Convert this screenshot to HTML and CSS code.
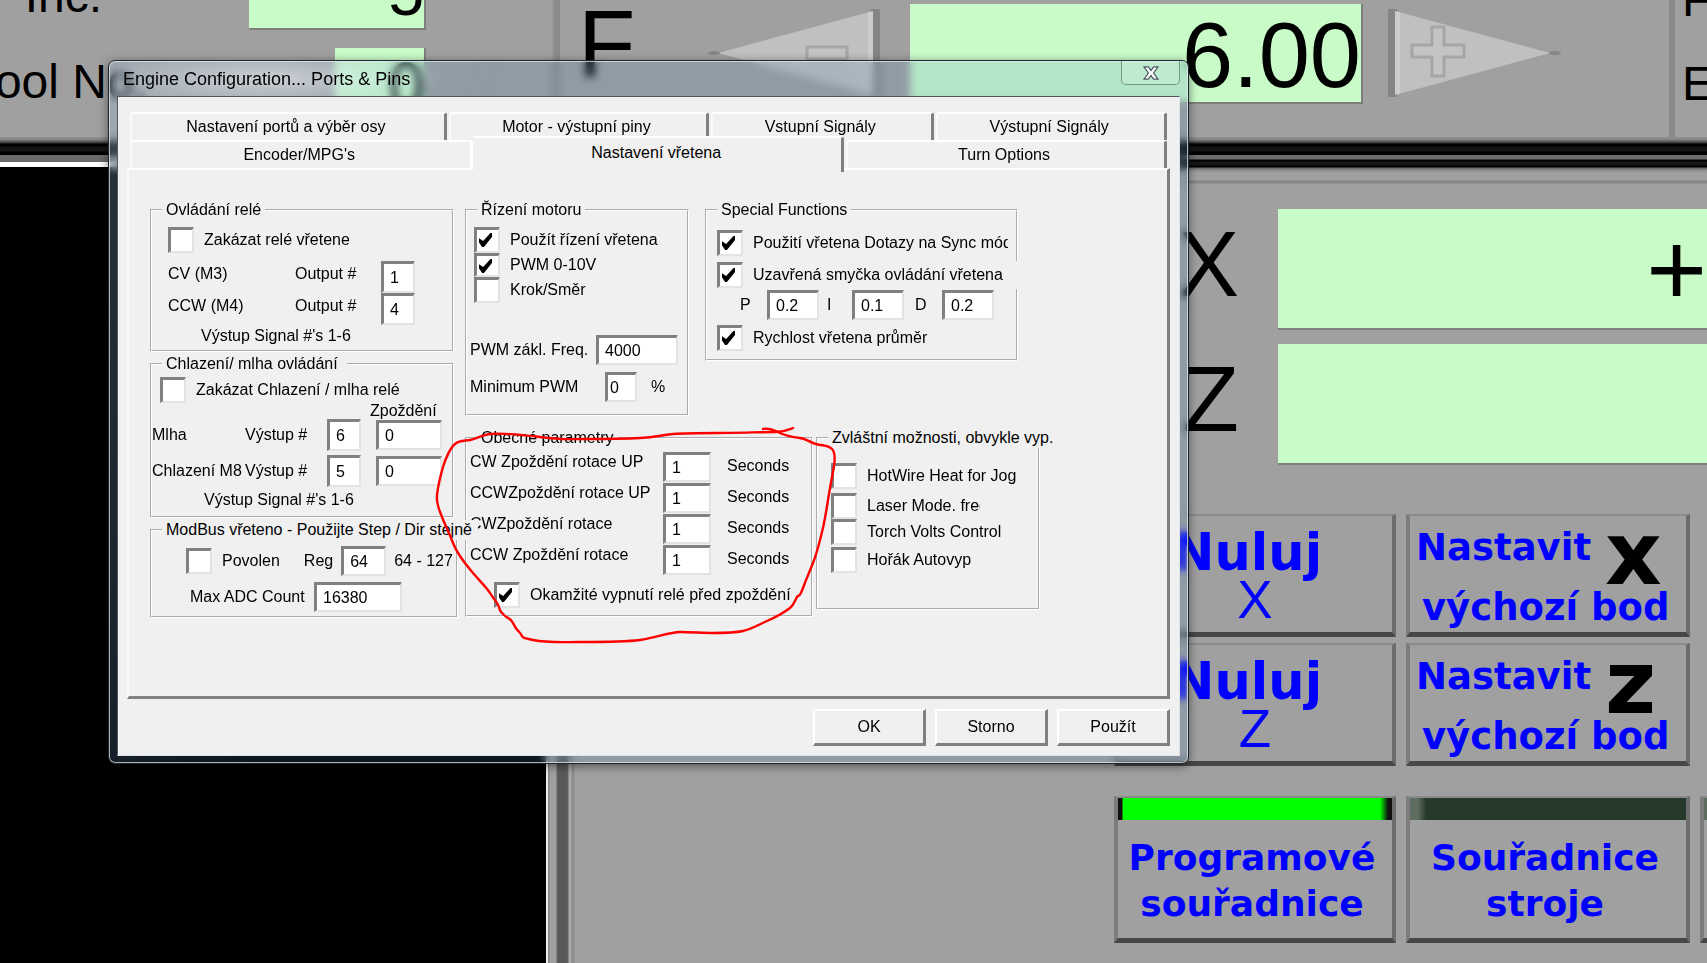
FILE: index.html
```html
<!DOCTYPE html>
<html lang="cs">
<head>
<meta charset="utf-8">
<title>Engine Configuration... Ports &amp; Pins</title>
<link rel="stylesheet" href="styles.css">
</head>
<body>
<main class="machine">
  <section class="status">
    <div class="tool-info">
      <div class="info-row info-inc"><span class="info-label">Inc.</span><output class="lcd lcd-inc">5</output></div>
      <div class="info-row info-tool"><span class="info-label">Tool No.</span><output class="lcd lcd-tool">0</output></div>
    </div>
    <div class="feed">
      <span class="feed-label">F</span>
      <button class="arrow" type="button" aria-label="Feed minus">
        <svg width="176" height="92" viewBox="0 0 176 92">
          <path d="M163 2h9v88h-9z" fill="#858585"/>
          <path d="M10 46 165 4v84z" fill="#c0c0c0"/>
          <path d="M160 5h5v82h-5z" fill="#cdcdcd"/>
          <ellipse cx="6" cy="46" rx="6" ry="2" fill="#868686"/>
          <path d="M99 40h40v12H99z" fill="#c4c4c4" stroke="#a6a6a6" stroke-width="3"/>
        </svg>
      </button>
      <output class="lcd lcd-feed">6.00</output>
      <button class="arrow" type="button" aria-label="Feed plus">
        <svg width="176" height="92" viewBox="0 0 176 92">
          <path d="M1 2h9v88H1z" fill="#858585"/>
          <path d="M8 4 163 46 8 88z" fill="#c0c0c0"/>
          <path d="M8 5h5v82H8z" fill="#cdcdcd"/>
          <ellipse cx="168" cy="46" rx="6" ry="2" fill="#868686"/>
          <path d="M45 20h12v18h20v12H57v19H45V50H25V38h20z" fill="#c4c4c4" stroke="#a6a6a6" stroke-width="3"/>
        </svg>
      </button>
    </div>
    <div class="side"><span>F</span><span>E</span></div>
  </section>
  <div class="rail"></div>
  <section class="work">
    <div class="toolpath"></div>
    <div class="post"></div>
    <div class="dro">
      <div class="axis"><span class="axis-name">X</span><output class="lcd lcd-axis">+</output></div>
      <div class="axis"><span class="axis-name">Z</span><output class="lcd lcd-axis"></output></div>
      <div class="keys">
        <button class="key key-zero" type="button"><b>Nuluj</b><span>X</span></button>
        <button class="key key-set" type="button"><span>Nastavit <i>x</i></span><span>výchozí bod</span></button>
        <span></span>
        <button class="key key-zero" type="button"><b>Nuluj</b><span>Z</span></button>
        <button class="key key-set" type="button"><span>Nastavit <i>z</i></span><span>výchozí bod</span></button>
        <span></span>
        <button class="key key-mode on" type="button">Programové<br>souřadnice</button>
        <button class="key key-mode" type="button">Souřadnice<br>stroje</button>
        <span class="key key-mode key-cut"></span>
      </div>
    </div>
  </section>
</main>

<div class="dialog" role="dialog" aria-labelledby="dlg-title">
  <header class="titlebar">
    <h1 id="dlg-title">Engine Configuration... Ports &amp; Pins</h1>
    <button class="close" type="button" aria-label="Close">
      <svg width="16" height="14" viewBox="0 0 18 16"><path d="M1 1h5l3 4 3-4h5l-5 7 5 7h-5l-3-4-3 4H1l5-7z" fill="#fafafa" stroke="#4c5a62" stroke-width="1.4"/></svg>
    </button>
  </header>
  <form class="client">
    <div class="tabs" role="tablist">
      <div class="tab-row">
        <button type="button" role="tab" class="tab t1">Nastavení portů a výběr osy</button>
        <button type="button" role="tab" class="tab t2">Motor - výstupní piny</button>
        <button type="button" role="tab" class="tab t3">Vstupní Signály</button>
        <button type="button" role="tab" class="tab t4">Výstupní Signály</button>
      </div>
      <div class="tab-row">
        <button type="button" role="tab" class="tab t5">Encoder/MPG's</button>
        <button type="button" role="tab" class="tab t6 active" aria-selected="true">Nastavení vřetena</button>
        <button type="button" role="tab" class="tab t7">Turn Options</button>
      </div>
    </div>
    <div class="page" role="tabpanel">
      <div class="col">
        <fieldset class="group">
          <legend>Ovládání relé</legend>
          <div class="relay">
            <label class="check"><input type="checkbox">Zakázat relé vřetene</label>
            <div class="relay-grid">
              <span>CV (M3)</span><label for="m3">Output #</label><input id="m3" type="text" value="1">
              <span>CCW (M4)</span><label for="m4">Output #</label><input id="m4" type="text" value="4">
            </div>
            <p class="note">Výstup Signal #'s 1-6</p>
          </div>
        </fieldset>
        <fieldset class="group">
          <legend class="wide">Chlazení/ mlha ovládání</legend>
          <div class="coolant">
            <label class="check"><input type="checkbox">Zakázat Chlazení / mlha relé</label>
            <p class="delay-head">Zpoždění</p>
            <div class="coolant-grid">
              <span>Mlha</span><label for="mist">Výstup #</label><input id="mist" type="text" value="6"><input class="delay" type="text" aria-label="Mlha zpoždění" value="0">
              <span>Chlazení M8</span><label for="flood">Výstup #</label><input id="flood" type="text" value="5"><input class="delay" type="text" aria-label="Chlazení zpoždění" value="0">
            </div>
            <p class="note">Výstup Signal #'s 1-6</p>
          </div>
        </fieldset>
        <fieldset class="group modbus-group">
          <legend class="over">ModBus vřeteno - Použijte Step / Dir stejně</legend>
          <div class="modbus">
            <div class="line">
              <label class="check"><input type="checkbox">Povolen</label>
              <label class="reg" for="reg">Reg</label><input id="reg" class="w-reg" type="text" value="64"><span class="range">64 - 127</span>
            </div>
            <div class="line"><label class="adc" for="adc">Max ADC Count</label><input id="adc" class="w-adc" type="text" value="16380"></div>
          </div>
        </fieldset>
      </div>
      <div class="col-wide">
        <div class="top">
          <fieldset class="group motor-group">
            <legend>Řízení motoru</legend>
            <div class="motor">
              <label class="check"><input type="checkbox" checked>Použít řízení vřetena</label>
              <label class="check short"><input type="checkbox" checked>PWM 0-10V</label>
              <label class="check"><input type="checkbox">Krok/Směr</label>
              <div class="line freq"><label for="freq">PWM zákl. Freq.</label><input id="freq" type="text" value="4000"></div>
              <div class="line minpwm"><label for="minpwm">Minimum PWM</label><input id="minpwm" type="text" value="0"><span>%</span></div>
            </div>
          </fieldset>
          <fieldset class="group special-group">
            <legend>Special Functions</legend>
            <div class="special">
              <label class="check clip"><input type="checkbox" checked><span>Použití vřetena Dotazy na Sync mód</span></label>
              <label class="check cover"><input type="checkbox" checked><span>Uzavřená smyčka ovládání vřetena</span></label>
              <div class="pid">
                <label for="p">P</label><input id="p" type="text" value="0.2">
                <label for="i">I</label><input id="i" type="text" value="0.1">
                <label for="d">D</label><input id="d" type="text" value="0.2">
              </div>
              <label class="check"><input type="checkbox" checked>Rychlost vřetena průměr</label>
            </div>
          </fieldset>
        </div>
        <div class="bottom">
          <fieldset class="group general-group">
            <legend>Obecné parametry</legend>
            <div class="general">
              <div class="general-grid">
                <label for="g1">CW Zpoždění rotace UP</label><input id="g1" type="text" value="1"><span>Seconds</span>
                <label for="g2">CCWZpoždění rotace UP</label><input id="g2" type="text" value="1"><span>Seconds</span>
                <label for="g3">CWZpoždění rotace</label><input id="g3" type="text" value="1"><span>Seconds</span>
                <label for="g4">CCW Zpoždění rotace</label><input id="g4" type="text" value="1"><span>Seconds</span>
              </div>
              <label class="check"><input type="checkbox" checked>Okamžité vypnutí relé před zpoždění</label>
            </div>
          </fieldset>
          <fieldset class="group options-group">
            <legend class="over">Zvláštní možnosti, obvykle vyp.</legend>
            <div class="options">
              <label class="check"><input type="checkbox">HotWire Heat for Jog</label>
              <label class="check clip-laser"><input type="checkbox"><span>Laser Mode. freq</span></label>
              <label class="check clip-torch"><input type="checkbox"><span>Torch Volts Control</span></label>
              <label class="check"><input type="checkbox">Hořák Autovyp</label>
            </div>
          </fieldset>
        </div>
      </div>
    </div>
    <footer class="actions">
      <button type="button">OK</button>
      <button type="button">Storno</button>
      <button type="button">Použít</button>
    </footer>
  </form>
  <svg class="marker" viewBox="430 420 420 230" aria-hidden="true">
    <path d="M763 429C768 428 774 430 780 433S792 437 800 438 808 442 816 444 828 445 832 449 835 462 833 472 830 487 828 500 825 520 822 532 817 553 813 563 807 577 803 588 799 594 797 597 794 605 790 608 776 617 767 621 752 629 743 631 722 633 713 633 690 632 680 632 655 638 640 640 600 642 580 642 548 643 533 640 524 637 520 633 515 628 513 623 508 619 504 615 500 611 499 607 493 598 490 593 478 579 473 573 458 556 453 543 445 525 442 517 436 504 437 495 441 474 443 467 450 448 455 444 464 441 470 440 482 435 490 434 515 434 540 437 560 439 580 439 622 439 640 438 660 435 673 434 702 433 717 433 766 432 775 432 788 430 793 428"/>
  </svg>
</div>
</body>
</html>
```
FILE: styles.css
```css
* { box-sizing: border-box; }

body {
  margin: 0;
  background: #a0a0a0;
  font: 16px/20px "Liberation Sans", Arial, sans-serif;
  color: #000;
  overflow: hidden;
}

button, input { font: inherit; color: inherit; }
p { margin: 0; }

/* Machine screen */
.machine {
  display: flex;
  flex-direction: column;
  height: 100vh;
  min-height: 963px;
}

.status { display: flex; height: 137px; overflow: hidden; }

.lcd {
  display: block;
  background: #c9fbc9;
  border-right: 2px solid #7e7e7e;
  border-bottom: 2px solid #7e7e7e;
  text-align: right;
  overflow: hidden;
}

.tool-info { width: 560px; flex: none; border-right: 6px solid #8a8a8a; box-shadow: inset -2px 0 #969696; }
.info-row { display: flex; }
.info-label { display: flex; justify-content: flex-end; font-size: 48px; line-height: 46px; white-space: nowrap; flex: none; }
.info-inc { height: 30px; align-items: flex-end; }
.info-inc .info-label { width: 102px; padding-bottom: 11px; }
.info-tool { padding-top: 18px; }
.info-tool .info-label { width: 147px; padding-top: 11px; }
.lcd-inc { width: 177px; height: 30px; margin-left: 147px; font-size: 64px; display: flex; align-items: flex-end; justify-content: flex-end; line-height: 70px; }
.lcd-tool { width: 91px; height: 64px; margin-left: 188px; font-size: 64px; line-height: 76px; }

.feed { display: flex; flex: 1; align-items: flex-start; padding: 4px 106px 0 18px; border-right: 6px solid #8a8a8a; }
.feed-label { width: 130px; font-size: 94px; line-height: 80px; }
.arrow { flex: none; padding: 3px 0 0; border: 0; background: none; }
.arrow svg { display: block; }
.lcd-feed { flex: 1; height: 100px; margin: 0 24px 0 26px; font-size: 92px; line-height: 102px; }

.side { display: flex; flex-direction: column; justify-content: flex-end; gap: 38px; width: 32px; padding: 0 0 30px 7px; font-size: 48px; line-height: 46px; overflow: hidden; }

.rail { flex: none; height: 18px; background: linear-gradient(#8c8c8c 0 2px, #666 4px, #333 6px, #000 7px 9px, #141414 10px 14px, #000 15px); }

.work { display: flex; flex: 1; min-height: 0; }
.toolpath { flex: none; width: 546px; background: #000; border-top: 7px solid #6a6a6a; box-shadow: inset 0 5px #fff; }
.post { flex: none; width: 29px; background: linear-gradient(90deg, #eee 0 2px, #888 2px 3px, #a0a0a0 4px 10px, #666 11px, #5a5a5a 12px 21px, #666 22px, #a8a8a8 23px 25px, #8c8c8c 26px 28px, #a0a0a0 29px); }
.dro {
  flex: 1;
  min-width: 0;
  padding-top: 54px;
  background: linear-gradient(#6e6e6e 0 4px, #000 5px 6px, #161616 7px 10px, #000 11px 12px, #666 13px, #8c8c8c 15px, #a0a0a0 18px 25px, #868686 26px 28px, #a0a0a0 29px);
}
.axis { display: flex; margin-bottom: 14px; }
.axis-name { width: 703px; padding-right: 39px; text-align: right; font-size: 92px; line-height: 110px; }
.lcd-axis { flex: 1; height: 121px; border-right: 0; font-size: 104px; line-height: 120px; }

.keys {
  display: grid;
  grid-template-columns: 282px 284px 7px;
  gap: 6px 10px;
  justify-content: end;
  padding-top: 35px;
}
.key {
  display: flex;
  flex-direction: column;
  align-items: center;
  height: 123px;
  padding: 0;
  background: #a0a0a0;
  border: solid;
  border-width: 2px 4px 5px 4px;
  border-color: #8a8a8a #6c6c6c #474747 #7c7c7c;
  color: #00f;
  font-family: "DejaVu Sans", Verdana, sans-serif;
}
.key-zero b { font-size: 51px; line-height: 50px; padding: 12px 16px 0 0; }
.key-zero span { font: 53px/44px "Liberation Sans", Arial, sans-serif; }
.key-set { font-weight: bold; font-size: 37px; align-items: flex-start; padding: 12px 0 0 6px; }
.key-set span { display: flex; line-height: 40px; white-space: nowrap; height: 60px; }
.key-set span + span { padding-left: 6px; height: 44px; }
.key-set i { font-style: normal; font-size: 88px; line-height: 52px; color: #000; padding-left: 14px; }
.key-mode {
  height: 147px;
  margin-top: 24px;
  padding: 26px 6px 0 0;
  background: linear-gradient(90deg, #5c6c5e 0, #5c6c5e 8px, #263a2b 16px) top / 100% 22px no-repeat #a0a0a0;
  font-weight: bold;
  font-size: 36px;
  line-height: 46px;
  display: block;
}
.key-mode.on { background: linear-gradient(90deg, #111 0 4px, #0f0 5px calc(100% - 12px), #111 calc(100% - 4px)) top / 100% 22px no-repeat #a0a0a0; }
.key-cut { border-right: 0; }

/* Dialog window */
.dialog {
  position: absolute;
  left: 108px;
  right: 518px;
  top: 60px;
  padding: 0 8px 7px;
  border: 1px solid #20262c;
  border-radius: 7px;
  background: linear-gradient(110deg, rgba(255, 255, 255, .12) 0, rgba(255, 255, 255, 0) 30%), rgba(70, 130, 190, .17);
  box-shadow: inset 0 0 0 1px rgba(230, 240, 250, .7), 0 2px 10px rgba(0, 0, 0, .5);
  backdrop-filter: blur(4px);
}
.titlebar {
  display: flex;
  justify-content: space-between;
  height: 35px;
  padding-left: 6px;
  background: radial-gradient(ellipse 180px 30px at 150px 18px, rgba(255, 255, 255, .5), rgba(255, 255, 255, 0));
}
.titlebar h1 { margin: 0; font-size: 18px; font-weight: normal; line-height: 36px; }
.close {
  display: flex;
  align-items: center;
  justify-content: center;
  width: 59px;
  height: 24px;
  padding: 0;
  border: 1px solid rgba(70, 95, 95, .6);
  border-top: 0;
  border-radius: 0 0 5px 5px;
  background: rgba(255, 255, 255, .15);
}

.client { background: #f0f0f0; border: 1px solid #50585f; border-right-color: #dfe4e8; border-bottom-color: #dfe4e8; padding: 15px 9px 9px; }

.tabs { padding: 0 3px; }
.tab-row { display: flex; height: 28px; }
.tab {
  flex-basis: 0;
  height: 28px;
  padding: 0 4px 0 0;
  border: solid;
  border-width: 2px 3px 0 2px;
  border-color: #fff #808080 #fff #fafafa;
  border-radius: 3px 3px 0 0;
  background: #f0f0f0;
  margin-right: 2px;
  white-space: nowrap;
}
.tab:last-child { margin-right: 0; }
.t1 { flex-grow: 319; }
.t2 { flex-grow: 261; }
.t3 { flex-grow: 222; }
.t4 { flex-grow: 230; }
.t5 { flex-grow: 343; border-right-color: #fff; margin-right: 0; }
.t6 { flex-grow: 371; }
.t7 { flex-grow: 320; }
.tab.active { height: 36px; margin-top: -4px; padding-bottom: 4px; position: relative; border-left-color: #f0f0f0; }

.page {
  display: flex;
  align-items: flex-start;
  gap: 11px;
  padding: 30px 0 78px 21px;
  border: solid;
  border-width: 2px 3px 3px 2px;
  border-color: #fff #808080 #808080 #fafafa;
}
.col { flex: none; width: 304px; display: flex; flex-direction: column; gap: 2px; }
.col-wide { display: flex; flex-direction: column; gap: 12px; }
.top, .bottom { display: flex; align-items: flex-start; }
.top { gap: 16px; }
.bottom { gap: 3px; }

.group { min-width: 0; margin: 0; padding: 0; border: 2px groove #fff; }
.group legend { margin-left: 10px; padding: 0 4px; white-space: nowrap; }
.group .wide { padding-right: 9px; }
.group .over { width: max-content; position: relative; z-index: 1; padding-right: 6px; background: #f0f0f0; }
.modbus-group { width: 308px; }
.motor-group { width: 224px; }
.special-group { width: 313px; }
.general-group { width: 348px; }
.options-group { width: 224px; }

.group input {
  margin: 0;
  border: solid;
  border-width: 3px 2px 2px 3px;
  border-color: #808080 #e3e3e3 #e3e3e3 #808080;
  border-radius: 0;
  background: #fff;
}
.group input[type="text"] { width: 34px; height: 30px; padding: 0 0 0 6px; }
.group input[type="checkbox"] { appearance: none; flex: none; width: 26px; height: 26px; }
.group input[type="checkbox"]:checked::before {
  content: "";
  display: block;
  width: 13px;
  height: 14px;
  margin: 3px 0 0 2px;
  background: #000;
  clip-path: polygon(0 38%, 32% 58%, 88% 0, 100% 0, 100% 28%, 38% 100%, 24% 100%, 0 68%);
}
.check { display: flex; align-items: center; gap: 10px; white-space: nowrap; }
.line { display: flex; align-items: center; white-space: nowrap; }

.relay { padding: 7px 0 4px 16px; }
.relay-grid { display: grid; grid-template-columns: 127px 86px 34px; line-height: 26px; margin-top: 8px; }
.relay-grid input[type="text"] { height: 32px; }
.relay .note { padding: 1px 0 0 33px; }

.coolant { padding: 3px 0 6px; }
.coolant .check { padding-left: 8px; }
.delay-head { padding-left: 218px; line-height: 16px; }
.coolant-grid { display: grid; grid-template-columns: 93px 82px 49px 66px; row-gap: 4px; align-items: center; white-space: nowrap; }
.coolant-grid input[type="text"] { height: 32px; }
.coolant-grid .delay[type="text"] { width: 66px; height: 30px; }
.coolant .note { padding: 3px 0 0 52px; }

.modbus { display: flex; flex-direction: column; gap: 6px; padding: 6px 0 4px 34px; }
.modbus .reg { padding: 0 8px 0 24px; }
.group .w-reg[type="text"] { width: 45px; }
.group .w-adc[type="text"] { width: 88px; }
.range { padding-left: 8px; }
.adc { width: 128px; padding-left: 4px; }

.motor { padding: 7px 0 12px 7px; }
.motor .short { height: 24px; }
.motor .short input[type="checkbox"] { height: 24px; }
.freq { margin: 32px 0 7px -4px; }
.freq label { width: 126px; }
.freq input[type="text"] { width: 82px; }
.minpwm { margin-left: -4px; }
.minpwm label { width: 135px; }
.minpwm input[type="text"] { width: 32px; padding-left: 2px; }
.minpwm span { padding-left: 14px; }

.special { padding: 10px 0 8px 10px; }
.clip { margin-bottom: 6px; }
.clip span { width: 255px; overflow: hidden; }
.cover { margin-right: -2px; }
.cover span { flex: 1; line-height: 28px; background: #f0f0f0; margin: -1px 0; }
.pid { display: grid; grid-template-columns: 27px 60px 25px 63px 27px 52px; padding: 2px 0 5px 23px; line-height: 30px; }
.pid input[type="text"] { width: 52px; }

.general { padding: 4px 0 7px 3px; }
.general-grid { display: grid; grid-template-columns: 193px 64px auto; row-gap: 1px; margin-bottom: 7px; white-space: nowrap; }
.general-grid input[type="text"] { width: 48px; }
.general-grid span { line-height: 28px; }
.general-grid label { line-height: 20px; }
.general .check { padding-left: 24px; }

.options { padding: 15px 0 35px 13px; }
.clip-laser { margin-top: 4px; }
.clip-laser span { width: 113px; overflow: hidden; }
.clip-torch { margin-bottom: 2px; }
.clip-torch span { width: 135px; overflow: hidden; }

.actions { display: flex; justify-content: flex-end; gap: 9px; padding-top: 10px; }
.actions button {
  width: 113px;
  height: 37px;
  padding: 0;
  border: solid;
  border-width: 2px 3px 3px 2px;
  border-color: #fff #808080 #808080 #fff;
  background: #f0f0f0;
}

/* Hand-drawn ring over the general parameters */
.marker { position: absolute; left: 321px; top: 359px; width: 420px; height: 230px; z-index: 2; pointer-events: none; }
.marker path { fill: none; stroke: #f00; stroke-width: 2.4; stroke-linecap: round; stroke-linejoin: round; }
```
